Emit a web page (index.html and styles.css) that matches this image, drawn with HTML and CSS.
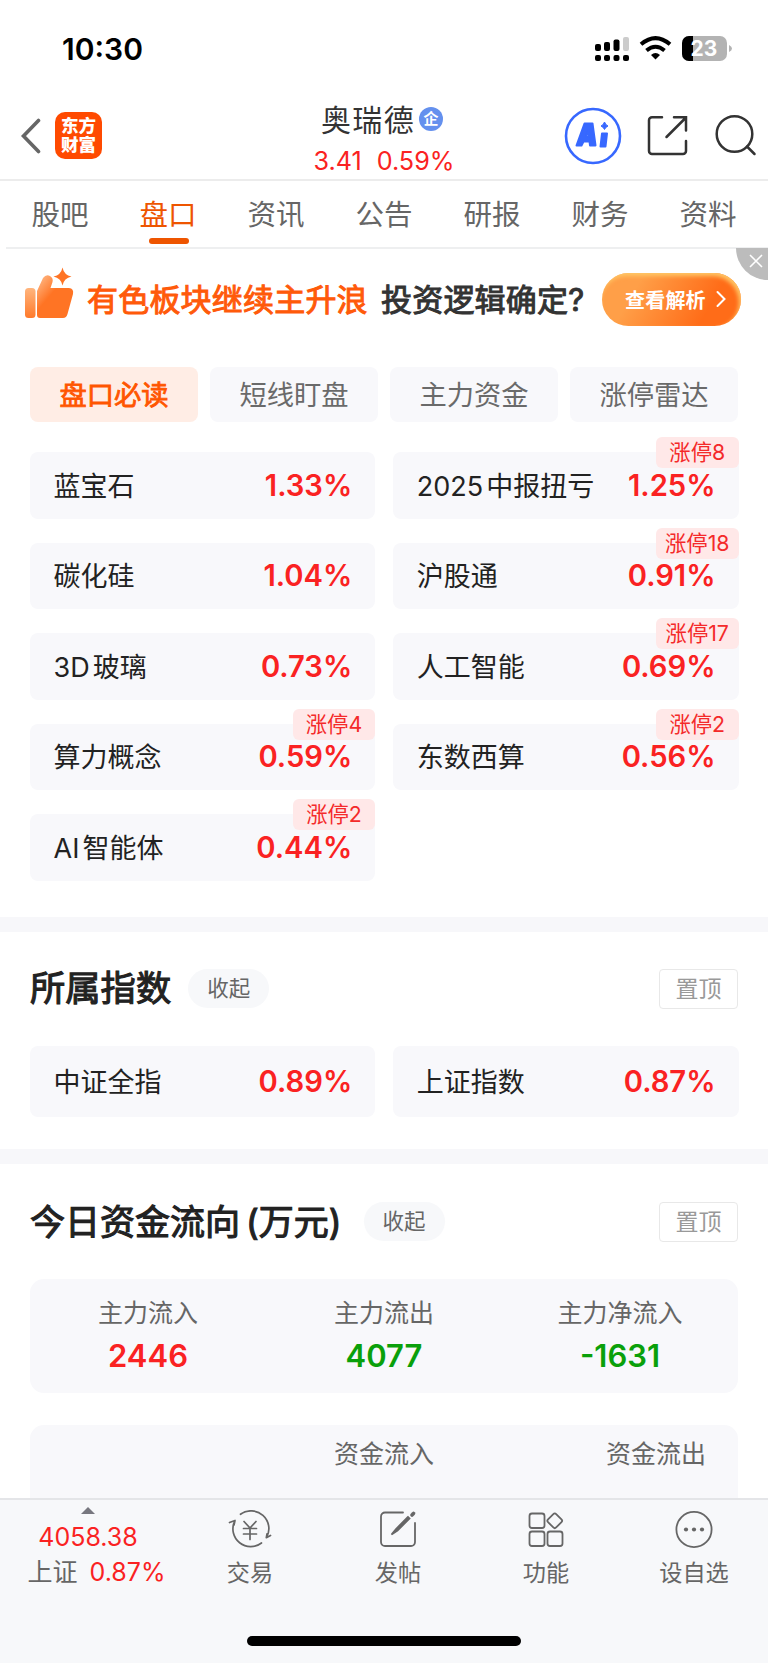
FILE: index.html
```html
<!DOCTYPE html>
<html lang="zh-CN">
<head>
  <meta charset="UTF-8">
  <title>奥瑞德</title>
  <meta name="viewport" content="width=device-width, initial-scale=1">
  <link rel="stylesheet" href="styles.css">
</head>
<body>
<div class="phone">

  <!-- status bar -->
  <div class="status">
    <span class="time">10:30</span>
    <svg class="status-icons" width="140" height="28" viewBox="0 0 140 28">
      <rect x="0" y="9" width="6" height="7" rx="2"/>
      <rect x="9" y="7" width="6" height="9" rx="2"/>
      <rect x="18.500" y="4.500" width="6" height="11.500" rx="2"/>
      <rect x="28" y="2" width="6" height="14" rx="2" fill="#ccc"/>
      <rect x="0" y="20" width="6" height="6" rx="2"/>
      <rect x="9" y="20" width="6" height="6" rx="2"/>
      <rect x="18.500" y="20" width="6" height="6" rx="2"/>
      <rect x="28" y="20" width="6" height="6" rx="2"/>
      <g fill="none" stroke="#000" stroke-width="4">
        <path d="M46 9.300 Q60.500 -3 75 9.300"/>
        <path d="M51.500 15.500 Q60.500 8 69.500 15.500"/>
      </g>
      <path d="M56 20 Q60.500 16 65 20 L60.500 24.500 Z"/>
      <rect x="87" y="1" width="45" height="25" rx="7" fill="#b3b3b3"/>
      <path d="M98 1 H94 a7 7 0 0 0 -7 7 v11 a7 7 0 0 0 7 7 h4 Z"/>
      <path d="M134 10 q3 1.500 3 3.500 q0 2 -3 3.500 Z" fill="#b3b3b3"/>
      <text x="109" y="21" text-anchor="middle" class="battery">23</text>
    </svg>
  </div>

  <!-- title bar -->
  <div class="header">
    <div class="header-left">
      <svg width="22" height="36" viewBox="0 0 22 36"><path d="M18.500 2.500 L3.500 18 L18.500 33.500" fill="none" stroke="#666" stroke-width="3.600" stroke-linecap="round"/></svg>
      <div class="logo">东方<br>财富</div>
    </div>
    <div class="stock">
      <div class="stock-name">奥瑞德<span class="badge">企</span></div>
      <div class="stock-price"><span>3.41</span><span>0.59%</span></div>
    </div>
    <div class="header-right">
      <svg width="58" height="58" viewBox="0 0 58 58">
        <circle cx="29" cy="29" r="27" fill="#fff" stroke="#3768ff" stroke-width="2.600"/>
        <g fill="#3768ff" stroke="#3768ff" stroke-width="2" stroke-linejoin="round">
          <path fill-rule="evenodd" d="M20.500 16.500 H28.500 L31.500 38.500 H26 L25.500 34.500 H19.500 L17.500 38.500 H12.500 Z M24.300 23.500 L22 29.500 H25 Z"/>
          <path d="M38 26.500 H43 L41.500 39.500 H36.500 Z"/>
          <path d="M40.500 15 Q41.500 18 44 19 Q41.500 20 40.500 22.500 Q39.500 20 37 19 Q39.500 18 40.500 15 Z" stroke-width="1"/>
        </g>
      </svg>
      <svg width="42" height="42" viewBox="0 0 42 42" fill="none" stroke="#333" stroke-width="2.500" stroke-linecap="round">
        <path d="M15 2.300 H5 a3 3 0 0 0 -3 3 V36 a3 3 0 0 0 3 3 H36 a3 3 0 0 0 3 -3 V26"/>
        <path d="M27 2.300 H39 V15.500 M38.500 3 L19.500 22"/>
      </svg>
      <svg width="44" height="44" viewBox="0 0 44 44" fill="none" stroke="#333" stroke-width="2.500" stroke-linecap="round">
        <circle cx="21.500" cy="20" r="17.800"/>
        <path d="M34 32.500 L41.500 40"/>
      </svg>
    </div>
  </div>

  <!-- tabs -->
  <div class="tabs">
    <span>股吧</span>
    <span class="active">盘口</span>
    <span>资讯</span>
    <span>公告</span>
    <span>研报</span>
    <span>财务</span>
    <span>资料</span>
  </div>

  <!-- promo strip -->
  <div class="promo">
    <svg class="thumb" width="50" height="54" viewBox="0 0 50 54">
      <defs>
        <linearGradient id="g1" x1="0" y1="0" x2="0" y2="1"><stop offset="0" stop-color="#ffb57d"/><stop offset="1" stop-color="#ff7a2b"/></linearGradient>
        <linearGradient id="g2" x1="0" y1="0" x2="0.600" y2="0.600"><stop offset="0" stop-color="#ffc293"/><stop offset="0.700" stop-color="#ff7424"/></linearGradient>
      </defs>
      <rect x="1" y="22" width="10.500" height="30" rx="3.500" fill="url(#g1)"/>
      <path d="M13 25 L19 12 Q22 8 26 10 Q29.500 12 28.500 16 L26.500 22 H45 Q50 22.500 49 28 L43.500 48 Q42.500 52 39 52 H16 Q13 52 13 49 Z" fill="url(#g2)"/>
      <path d="M38.500 1.500 Q40 9 47.500 10.500 Q40 12 38.500 19.500 Q37 12 29.500 10.500 Q37 9 38.500 1.500 Z" fill="#ff7424"/>
    </svg>
    <span class="promo-hot">有色板块继续主升浪</span>
    <span class="promo-text">投资逻辑确定?</span>
    <span class="promo-btn">查看解析
      <svg width="10" height="18" viewBox="0 0 10 18"><path d="M1.500 2 L8.500 9 L1.500 16" fill="none" stroke="#fff" stroke-width="2" stroke-linecap="round"/></svg>
    </span>
    <span class="close">
      <svg width="14" height="14" viewBox="0 0 14 14"><path d="M1 1 L13 13 M13 1 L1 13" stroke="#fff" stroke-width="1.600"/></svg>
    </span>
  </div>

  <div class="content">
    <div class="chips">
      <span class="active">盘口必读</span>
      <span>短线盯盘</span>
      <span>主力资金</span>
      <span>涨停雷达</span>
    </div>

    <div class="cards">
      <div class="card"><span>蓝宝石</span><b>1.33%</b></div>
      <div class="card"><span><i>2025</i>中报扭亏</span><b>1.25%</b><em>涨停8</em></div>
      <div class="card"><span>碳化硅</span><b>1.04%</b></div>
      <div class="card"><span>沪股通</span><b>0.91%</b><em>涨停18</em></div>
      <div class="card"><span><i>3D</i>玻璃</span><b>0.73%</b></div>
      <div class="card"><span>人工智能</span><b>0.69%</b><em>涨停17</em></div>
      <div class="card"><span>算力概念</span><b>0.59%</b><em>涨停4</em></div>
      <div class="card"><span>东数西算</span><b>0.56%</b><em>涨停2</em></div>
      <div class="card"><span><i>AI</i>智能体</span><b>0.44%</b><em>涨停2</em></div>
    </div>

    <div class="band"></div>

    <!-- indexes -->
    <div class="title title-index">
      <h2>所属指数</h2><span class="pill">收起</span><span class="pin">置顶</span>
    </div>
    <div class="cards index-cards">
      <div class="card"><span>中证全指</span><b>0.89%</b></div>
      <div class="card"><span>上证指数</span><b>0.87%</b></div>
    </div>

    <div class="band"></div>

    <!-- money flow -->
    <div class="title title-flow">
      <h2>今日资金流向<span class="paren">(</span>万元)</h2><span class="pill">收起</span><span class="pin">置顶</span>
    </div>
    <div class="flow">
      <div>主力流入<b class="red">2446</b></div>
      <div>主力流出<b class="green">4077</b></div>
      <div>主力净流入<b class="green">-1631</b></div>
    </div>
    <div class="flow-table">
      <span></span><span class="mid">资金流入</span><span class="right">资金流出</span>
    </div>
  </div>

  <!-- bottom bar -->
  <div class="bottom">
    <div class="quote">
      <svg width="14" height="7" viewBox="0 0 14 7"><path d="M0 7 L7 0 L14 7 Z" fill="#77777f"/></svg>
      <span class="quote-num">4058.38</span>
      <span class="quote-row">上证<i>0.87%</i></span>
    </div>
    <div class="nav">
      <svg width="44" height="40" viewBox="0 0 44 40" fill="none" stroke="#666" stroke-width="1.700" stroke-linecap="round" stroke-linejoin="round">
        <path d="M12.500 4.300 A17.800 17.800 0 0 1 38.500 27.500 M38.300 27.700 L39 23.800 M38.300 27.700 L42.500 25.500"/>
        <path d="M33.500 33 A17.800 17.800 0 0 1 6.500 11.500 M1.500 12.500 L7 10.500 L6 15"/>
        <path d="M16 11.500 L22 18 L28 11.500 M15.500 18.500 H28.500 M15.500 24 H28.500 M22 18 V29.500"/>
      </svg>
      交易
    </div>
    <div class="nav">
      <svg width="44" height="40" viewBox="0 0 44 40" fill="none" stroke="#666" stroke-width="1.800" stroke-linecap="round">
        <path d="M27 2.500 H9 a4 4 0 0 0 -4 4 V32 a4 4 0 0 0 4 4 H35 a4 4 0 0 0 4 -4 V13"/>
        <path d="M32 7 L20 19 L15.500 24.500 L21.500 20.500 L33.500 8.500 Z" fill="#666"/>
        <path d="M36 5 L37.500 3.500" stroke-width="3.600"/>
      </svg>
      发帖
    </div>
    <div class="nav">
      <svg width="44" height="40" viewBox="0 0 44 40" fill="none" stroke="#666" stroke-width="1.800">
        <rect x="5.500" y="3.500" width="15" height="14.500" rx="2.500"/>
        <rect x="5.500" y="21.500" width="15" height="14.500" rx="2.500"/>
        <rect x="23.500" y="21.500" width="15" height="14.500" rx="2.500"/>
        <rect x="25" y="5" width="11.500" height="11.500" rx="2" transform="rotate(45 30.750 10.750)"/>
      </svg>
      功能
    </div>
    <div class="nav">
      <svg width="44" height="40" viewBox="0 0 44 40">
        <circle cx="22" cy="19.500" r="17.600" fill="none" stroke="#666" stroke-width="1.800"/>
        <g fill="#666"><circle cx="14" cy="19.500" r="2.100"/><circle cx="22" cy="19.500" r="2.100"/><circle cx="30" cy="19.500" r="2.100"/></g>
      </svg>
      设自选
    </div>
    <div class="home"></div>
  </div>

</div>
</body>
</html>
```
FILE: styles.css
```css
* {
  box-sizing: border-box;
}

body {
  margin: 0;
  background: #fff;
  color: #222;
  font-family: Inter, "Noto Sans CJK SC", sans-serif;
}

svg {
  display: block;
  flex: none;
}

i, em {
  font-style: normal;
}

.phone {
  width: 768px;
  height: 1663px;
  display: flex;
  flex-direction: column;
  overflow: hidden;
}

/* status bar */
.status {
  height: 98px;
  flex: none;
  padding: 35px 30px 0 62px;
  display: flex;
  justify-content: space-between;
}

.time {
  color: #000;
  font-size: 30px;
  line-height: 28px;
  font-weight: 600;
}

.status-icons {
  margin-right: 3px;
}

.battery {
  fill: #fff;
  font-size: 21px;
  font-weight: 700;
}

/* title bar */
.header {
  height: 83px;
  flex: none;
  border-bottom: 2px solid #ececec;
  display: grid;
  grid-template-columns: 240px 1fr 240px;
}

.header-left {
  display: flex;
  align-items: center;
  padding: 0 0 6px 20px;
  gap: 13px;
}

.logo {
  width: 47px;
  height: 47px;
  border-radius: 10px;
  background: #ff4a00;
  color: #fff;
  font-size: 17.5px;
  font-weight: 900;
  line-height: 19px;
  text-align: center;
  padding-top: 4px;
}

.stock {
  text-align: center;
}

.stock-name {
  display: flex;
  align-items: center;
  justify-content: center;
  margin-left: -4px;
  font-size: 30px;
  letter-spacing: 1.3px;
  line-height: 42px;
  height: 43px;
  color: #333;
}

.badge {
  width: 24px;
  height: 24px;
  margin: -1px 0 0 4px;
  border-radius: 50%;
  background: #6490ee;
  color: #fff;
  font-size: 15px;
  font-weight: 700;
  line-height: 23px;
  letter-spacing: 0;
}

.stock-price {
  display: flex;
  justify-content: center;
  gap: 15px;
  color: #fa2222;
  font-size: 25.2px;
  line-height: 41px;
  height: 38px;
}

.header-right {
  display: flex;
  align-items: center;
  padding: 0 10px 6px 36px;
}

.header-right svg:nth-child(2) {
  margin: 0 24px 0 25px;
}

/* tabs */
.tabs {
  height: 68px;
  flex: none;
  margin-left: 6px;
  border-bottom: 2px solid #eeeff0;
  display: grid;
  grid-template-columns: repeat(7, 108px);
  color: #666;
  font-size: 28.5px;
  line-height: 68px;
  text-align: center;
}

.tabs span {
  display: flex;
  flex-direction: column;
  align-items: center;
  height: 66px;
}

.tabs .active {
  color: #ee5500;
}

.tabs .active::after {
  content: "";
  flex: none;
  width: 40px;
  height: 6px;
  margin: -11px 0 0 1px;
  border-radius: 3px;
  background: #ee5500;
}

/* promo strip */
.promo {
  position: relative;
  height: 100px;
  flex: none;
  display: flex;
  align-items: center;
  padding-left: 24px;
  font-size: 31px;
  letter-spacing: 0.2px;
  white-space: nowrap;
}

.thumb {
  margin-top: -12px;
}

.promo-hot,
.promo-text {
  margin-top: -3px;
  -webkit-text-stroke: 1px;
}

.promo-hot {
  width: 294px;
  margin-left: 13px;
  color: #ff5a0a;
}

.promo-text {
  width: 221px;
  color: #333;
}

.promo-btn {
  display: flex;
  align-items: center;
  gap: 10px;
  width: 139px;
  height: 53px;
  padding-left: 23px;
  border-radius: 27px;
  background: linear-gradient(120deg, #ff9f48 25%, #ff6c18 75%);
  box-shadow: inset -2px 3px 4px #ffc766;
  color: #fff;
  font-size: 20px;
  font-weight: 700;
}

.close {
  position: absolute;
  top: -1px;
  right: 0;
  width: 32px;
  height: 32px;
  padding: 6px 0 0 13px;
  border-bottom-left-radius: 32px;
  background: #bcbcbc;
}

/* main content, cut off by the bottom bar */
.content {
  flex: 1;
  min-height: 0;
  overflow: hidden;
  padding-top: 18px;
}

.chips {
  display: grid;
  grid-template-columns: repeat(4, 168px);
  gap: 12px;
  margin: 0 30px;
}

.chips span {
  height: 55px;
  border-radius: 8px;
  background: #f8f8fb;
  color: #6a6a6a;
  font-size: 27.3px;
  line-height: 57px;
  text-align: center;
}

.chips .active {
  background: #ffede5;
  color: #ff5500;
  -webkit-text-stroke: 0.8px;
}

.cards {
  display: grid;
  grid-template-columns: 1fr 1fr;
  gap: 24px 18px;
  margin: 30px 29.500px 0 30px;
}

.card {
  position: relative;
  height: 66.5px;
  display: flex;
  align-items: center;
  justify-content: space-between;
  padding: 0 23px 0 23.5px;
  border-radius: 8px;
  background: #f8f8fb;
  font-size: 27px;
}

.card span {
  margin-top: -2px;
}

.card i {
  margin-right: 3px;
}

.card b {
  color: #fa2222;
  font-size: 29.2px;
  font-weight: 600;
}

.card em {
  position: absolute;
  top: -15px;
  right: 0;
  width: 82.5px;
  height: 31px;
  border-radius: 6px;
  background: #ffe8e8;
  color: #f42a2a;
  font-size: 21.3px;
  line-height: 30px;
  text-align: center;
}

.band {
  height: 15px;
  margin-top: 36px;
  background: #f7f7fa;
}

.title {
  display: flex;
  align-items: center;
  height: 40px;
  margin: 37px 30px 0;
}

.title h2 {
  margin: 0;
  font-size: 35.3px;
  font-weight: 400;
  line-height: 42px;
  -webkit-text-stroke: 1.1px;
}

.title-flow h2 {
  font-size: 35px;
}

.paren {
  margin-left: 6px;
}

.pill {
  width: 81px;
  height: 39px;
  margin-left: 17px;
  border-radius: 20px;
  background: #f7f8fa;
  color: #666;
  font-size: 21.5px;
  line-height: 39px;
  text-align: center;
}

.title-flow .pill {
  margin-left: 22px;
}

.pin {
  width: 79px;
  height: 40px;
  margin-left: auto;
  border: 1.5px solid #e8e8e8;
  border-radius: 4px;
  color: #999;
  font-size: 23px;
  line-height: 38.5px;
  text-align: center;
}

.index-cards {
  margin-top: 37px;
}

.index-cards .card {
  height: 71px;
}

.index-cards + .band {
  margin-top: 32px;
}

.title-flow {
  margin-top: 38px;
}

.flow {
  display: grid;
  grid-template-columns: repeat(3, 1fr);
  height: 114px;
  margin: 37px 30px 0;
  padding-top: 16px;
  border-radius: 14px;
  background: #f8f8fb;
  color: #666;
  font-size: 25px;
  line-height: 36px;
  text-align: center;
}

.flow b {
  display: block;
  font-size: 31px;
  font-weight: 600;
  line-height: 50px;
}

.flow .red {
  color: #fa2222;
}

.flow .green {
  color: #0aa00a;
}

.flow-table {
  display: grid;
  grid-template-columns: repeat(3, 1fr);
  height: 114px;
  margin: 32px 30px 0;
  padding: 11px 32px 0;
  border-radius: 14px;
  background: #f8f8fb;
  color: #666;
  font-size: 25px;
  line-height: 36px;
}

.mid {
  text-align: center;
}

.right {
  text-align: right;
}

/* bottom bar */
.bottom {
  height: 165px;
  flex: none;
  display: grid;
  grid-template-columns: 176px repeat(4, 148px);
  grid-template-rows: 136px 10px;
  border-top: 2px solid #e4e5e8;
  background: #f7f8fa;
  color: #666;
  font-size: 23.2px;
}

.quote,
.nav {
  display: flex;
  flex-direction: column;
  align-items: center;
}

.quote {
  padding-top: 7px;
}

.quote-num {
  margin-top: 5px;
  color: #fa2222;
  line-height: 36px;
  font-size: 25px;
}

.quote-row {
  display: flex;
  gap: 12px;
  margin-left: 17px;
  line-height: 34px;
  font-size: 25px;
}

.quote-row i {
  color: #fa2222;
}

.nav {
  padding-top: 10px;
  line-height: 34px;
  gap: 6px;
}

.home {
  grid-column: 1 / -1;
  justify-self: center;
  width: 274px;
  height: 10px;
  border-radius: 5px;
  background: #000;
}
```
